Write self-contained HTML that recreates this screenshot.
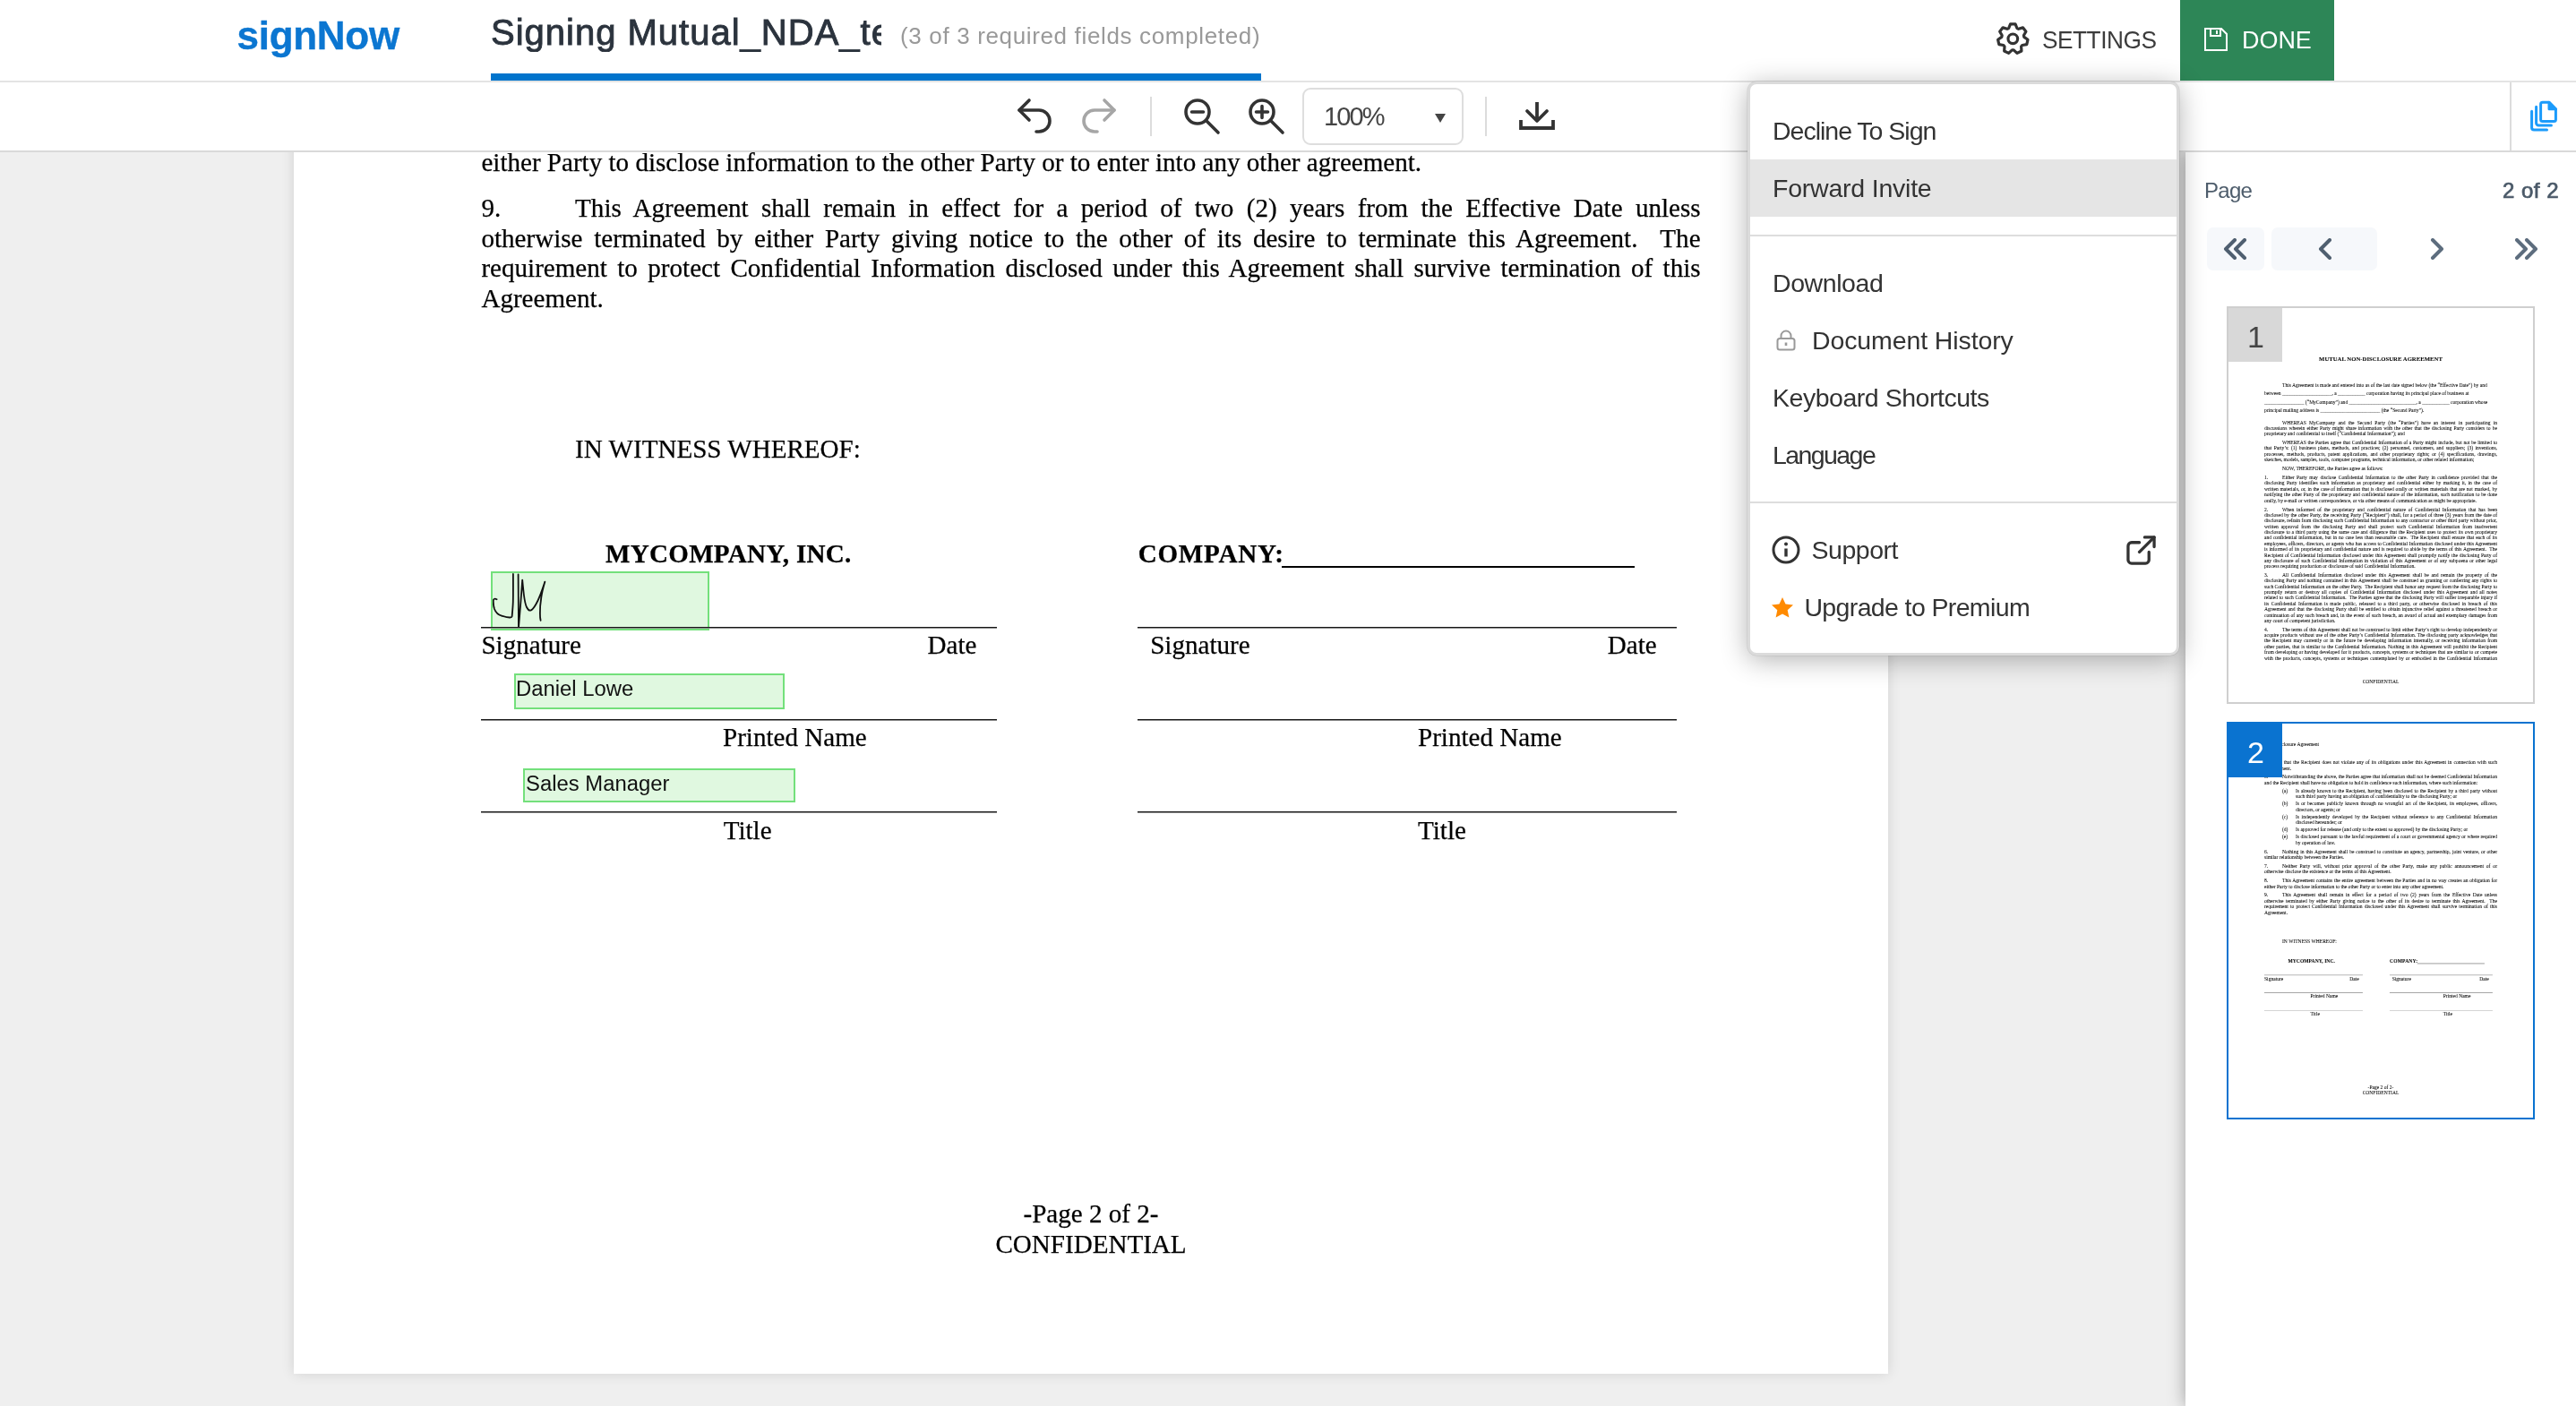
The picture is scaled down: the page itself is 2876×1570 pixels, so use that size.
<!DOCTYPE html>
<html lang="en">
<head>
<meta charset="utf-8">
<title>signNow - Signing Mutual_NDA_template</title>
<style>
*{box-sizing:border-box;margin:0;padding:0}
html,body{width:2876px;height:1570px;overflow:hidden;background:#efefef}
body{font-family:"Liberation Sans",sans-serif;color:#333;position:relative}
.abs{position:absolute}
#header,#toolbar,#page,#sidebar,#menu{will-change:transform}
/* ---------- header ---------- */
#header{position:absolute;left:0;top:0;width:2876px;height:92px;background:#fff;border-bottom:2px solid #e4e4e4;z-index:20}
#logo{position:absolute;left:264.5px;top:15px;font-size:44px;font-weight:700;color:#0b76d1;letter-spacing:-.27px;-webkit-text-stroke:.4px #0b76d1;line-height:50px;white-space:nowrap}
#title{position:absolute;left:548px;top:8px;width:436px;height:50px;overflow:hidden;white-space:nowrap;font-size:40px;line-height:56px;color:#2b333d;letter-spacing:1px;-webkit-text-stroke:.9px #2b333d}
#subtitle{position:absolute;left:1005px;top:24px;font-size:26px;line-height:32px;color:#999;white-space:nowrap;letter-spacing:.65px}
#progress{position:absolute;left:548px;top:82px;width:860px;height:8px;background:#0074cc}
#settings{position:absolute;left:2280px;top:27px;font-size:28.5px;line-height:34px;color:#3c3c3c;letter-spacing:-.5px;white-space:nowrap;transform:scaleX(.92);transform-origin:0 0}
#gear{position:absolute;left:2226px;top:22.2px;width:42.6px;height:42.6px}
#done{position:absolute;left:2434px;top:0;width:172px;height:90px;background:#2d8657;color:#fff}
#done span{position:absolute;left:69px;top:27px;font-size:28.5px;line-height:34px;transform:scaleX(.945);transform-origin:0 0}
#done svg{position:absolute;left:27px;top:31px;width:26px;height:26px}
/* ---------- toolbar ---------- */
#toolbar{position:absolute;left:0;top:92px;width:2876px;height:78px;background:#fff;border-bottom:2px solid #d9d9d9;z-index:10}
.sep{position:absolute;top:16px;width:2px;height:44px;background:#dcdcdc}
#zoomsel{position:absolute;left:1454px;top:6px;width:180px;height:64px;border:2px solid #dedede;border-radius:9px;background:#fff}
#zoomsel span{position:absolute;left:22px;top:14px;font-size:29px;line-height:32px;color:#444;letter-spacing:-1.9px}
#zoomsel i{position:absolute;left:146px;top:26.5px;width:0;height:0;border-left:6px solid transparent;border-right:6px solid transparent;border-top:10px solid #444}
#tbdiv{position:absolute;left:2802px;top:0;width:2px;height:76px;background:#dcdcdc}
/* ---------- document ---------- */
#page{position:absolute;left:328px;top:-770px;width:1780px;height:2304px;background:#fff;box-shadow:0 0 14px rgba(0,0,0,.12);z-index:1}
.doc{position:absolute;left:0;top:0;width:1780px;height:2304px;font-family:"Liberation Serif",serif;font-size:29.085px;line-height:33.45px;color:#000;-webkit-text-stroke:.25px #000}
.doc .l{position:absolute;white-space:nowrap}
.doc .j{white-space:normal;text-align:justify;text-align-last:justify}
.doc .b{font-weight:700;letter-spacing:.27px}
.doc .tab{display:inline-block;text-align:left}
.doc .hl{position:absolute;height:2px;background:linear-gradient(to bottom,#161616 50%,#8c8c8c 50%)}
.field{position:absolute;background:#e0f8e0;border:2px solid #73e07b;font-family:"Liberation Sans",sans-serif;font-size:23.85px;color:#111;white-space:nowrap}
/* ---------- sidebar ---------- */
#sidebar{position:absolute;left:2440px;top:170px;width:436px;height:1400px;background:#fff;box-shadow:0 0 18px rgba(0,0,0,.35);z-index:5}
#sidebar .lbl{position:absolute;top:28px;font-size:24px;line-height:30px;color:#4d5c6b;white-space:nowrap}
.nav{position:absolute;top:84px;height:48px;border-radius:7px}
.nav svg{position:absolute;top:12px;width:40px;height:24px}
.thumb{position:absolute;left:46px;width:344px;height:444px;border:2px solid #cfcfcf;background:#fff;overflow:hidden}
.thumb .mini{position:absolute;left:0;top:0;width:1780px;height:2304px;transform:scale(.191);transform-origin:0 0}
.badge{position:absolute;left:-2px;top:-2px;width:62px;height:62px;font-size:34px;line-height:68px;text-align:center;padding-left:3px}
/* ---------- menu ---------- */
#menu{position:absolute;left:1951px;top:91px;width:482px;height:641px;background:#fff;border:3px solid #dbdbdb;border-radius:10px;box-shadow:0 0 0 .6px rgba(0,0,0,.1),0 5px 30px rgba(0,0,0,.3);z-index:30;padding-top:20px;overflow:hidden}
.mi{position:relative;height:64px;font-size:28.5px;line-height:64px;color:#333;padding-left:25px;white-space:nowrap}
.mi.hov{background:#e5e5e5}
.mdiv{height:2px;background:#dddddd;margin:20px 0}
.mi svg{position:absolute}
</style>
</head>
<body>

<!-- ================= DOCUMENT PAGE ================= -->
<div id="page">
  <!-- filled fields -->
  <div class="field" style="left:220px;top:1408px;width:244px;height:66px">
    <svg class="abs" style="left:0;top:0" width="240" height="62" viewBox="550 640 240 62" fill="none" stroke="#111" stroke-width="1.8" stroke-linecap="round" stroke-linejoin="round">
      <path d="M554.6 669.2 C552.5 668.2 551 668.6 550.8 670.5 C550.6 674 551 677 552 680 C553.5 684 556 686.5 560 687.6 C563 688.5 566 689.5 569 689.5 C570.8 689.6 571.5 689.4 571.6 688.5 C572 684 572.6 678 572.8 672 C573 662 572.9 650 572.9 640.9"/>
      <path d="M578.6 641.4 C578.7 660 578.8 680 579 701 C580.5 684 582 665 583.2 647.6 C583.8 654 584.4 660 585 665 C585.8 671 586.8 675.5 588 678 C589.5 681 591 682 592.5 681.6 C594.5 681 596.5 678 598.5 674.5 C602.5 667.5 605.5 658.5 608.4 649.6 C606.5 656 605 662 604.2 668 C603.2 674 602.8 680 602.9 685 C602.9 688.5 603.1 691 603.6 692.8"/>
    </svg>
  </div>
  <div class="field" style="left:246px;top:1522px;width:302px;height:40px;line-height:30px;padding-left:0">Daniel Lowe</div>
  <div class="field" style="left:256px;top:1628px;width:304px;height:38px;line-height:29.6px;padding-left:1px">Sales Manager</div>
  <div class="doc">
<div class="l" style="left:119.0px;top:102.56px;">Mutual Non-Disclosure Agreement</div>
<div class="l j" style="left:209.4px;top:210.06px;width:1361.2px;">provided that the Recipient does not violate any of its obligations under this Agreement in connection with such</div>
<div class="l" style="left:209.4px;top:243.51px;width:1361.2px;">development.</div>
<div class="l j" style="left:209.4px;top:294.56px;width:1361.2px;"><span class="tab" style="width:104.7px">5.</span>Notwithstanding the above, the Parties agree that information shall not be deemed Confidential Information</div>
<div class="l" style="left:209.4px;top:328.01px;width:1361.2px;">and the Recipient shall have no obligation to hold in confidence such information, where such information:</div>
<div class="l" style="left:314.1px;top:376.56px">(a)</div>
<div class="l j" style="left:392.6px;top:376.56px;width:1178.0px;">Is already known to the Recipient, having been disclosed to the Recipient by a third party without</div>
<div class="l" style="left:392.6px;top:410.01px;width:1178.0px;">such third party having an obligation of confidentiality to the disclosing Party; or</div>
<div class="l" style="left:314.1px;top:452.06px">(b)</div>
<div class="l j" style="left:392.6px;top:452.06px;width:1178.0px;">Is or becomes publicly known through no wrongful act of the Recipient, its employees, officers,</div>
<div class="l" style="left:392.6px;top:485.51px;width:1178.0px;">directors, or agents; or</div>
<div class="l" style="left:314.1px;top:527.56px">(c)</div>
<div class="l j" style="left:392.6px;top:527.56px;width:1178.0px;">Is independently developed by the Recipient without reference to any Confidential Information</div>
<div class="l" style="left:392.6px;top:561.01px;width:1178.0px;">disclosed hereunder; or</div>
<div class="l" style="left:314.1px;top:603.06px">(d)</div>
<div class="l" style="left:392.6px;top:603.06px;width:1178.0px;">Is approved for release (and only to the extent so approved) by the disclosing Party; or</div>
<div class="l" style="left:314.1px;top:645.06px">(e)</div>
<div class="l j" style="left:392.6px;top:645.06px;width:1178.0px;">Is disclosed pursuant to the lawful requirement of a court or governmental agency or where required</div>
<div class="l" style="left:392.6px;top:678.51px;width:1178.0px;">by operation of law.</div>
<div class="l j" style="left:209.4px;top:731.06px;width:1361.2px;"><span class="tab" style="width:104.7px">6.</span>Nothing in this Agreement shall be construed to constitute an agency, partnership, joint venture, or other</div>
<div class="l" style="left:209.4px;top:764.51px;width:1361.2px;">similar relationship between the Parties.</div>
<div class="l j" style="left:209.4px;top:816.46px;width:1361.2px;"><span class="tab" style="width:104.7px">7.</span>Neither Party will, without prior approval of the other Party, make any public announcement of or</div>
<div class="l" style="left:209.4px;top:849.91px;width:1361.2px;">otherwise disclose the existence or the terms of this Agreement.</div>
<div class="l j" style="left:209.4px;top:901.31px;width:1361.2px;"><span class="tab" style="width:104.7px">8.</span>This Agreement contains the entire agreement between the Parties and in no way creates an obligation for</div>
<div class="l" style="left:209.4px;top:934.76px;width:1361.2px;">either Party to disclose information to the other Party or to enter into any other agreement.</div>
<div class="l j" style="left:209.4px;top:986.16px;width:1361.2px;"><span class="tab" style="width:104.7px">9.</span>This Agreement shall remain in effect for a period of two (2) years from the Effective Date unless</div>
<div class="l j" style="left:209.4px;top:1019.61px;width:1361.2px;">otherwise terminated by either Party giving notice to the other of its desire to terminate this Agreement.&nbsp; The</div>
<div class="l j" style="left:209.4px;top:1053.06px;width:1361.2px;">requirement to protect Confidential Information disclosed under this Agreement shall survive termination of this</div>
<div class="l" style="left:209.4px;top:1086.51px;width:1361.2px;">Agreement.</div>
<div class="l" style="left:314.1px;top:1255.06px;">IN WITNESS WHEREOF:</div>
<div class="l b" style="left:348.0px;top:1372.36px;">MYCOMPANY, INC.</div>
<div class="l b" style="left:942.7px;top:1372.36px;letter-spacing:.78px;">COMPANY:</div>
<div class="hl" style="left:1103.4px;top:1401.6px;width:393.3px;height:2px;background:#000"></div>
<div class="hl" style="left:209px;top:1470.0px;width:576.3px"></div>
<div class="hl" style="left:942.2px;top:1470.0px;width:602px"></div>
<div class="hl" style="left:209px;top:1573.0px;width:576.3px"></div>
<div class="hl" style="left:942.2px;top:1573.0px;width:602px"></div>
<div class="hl" style="left:209px;top:1676.0px;width:576.3px"></div>
<div class="hl" style="left:942.2px;top:1676.0px;width:602px"></div>
<div class="l" style="left:209.4px;top:1473.86px;">Signature</div>
<div class="l" style="left:707.5px;top:1473.86px;">Date</div>
<div class="l" style="left:956.2px;top:1473.86px;">Signature</div>
<div class="l" style="left:1466.8px;top:1473.86px;">Date</div>
<div class="l" style="left:479.0px;top:1577.26px;">Printed Name</div>
<div class="l" style="left:1255.0px;top:1577.26px;">Printed Name</div>
<div class="l" style="left:479.7px;top:1680.76px;">Title</div>
<div class="l" style="left:1255.0px;top:1680.76px;">Title</div>
<div class="l" style="left:0.0px;top:2109.36px;width:1780.0px;text-align:center;">-Page 2 of 2-</div>
<div class="l" style="left:0.0px;top:2143.06px;width:1780.0px;text-align:center;">CONFIDENTIAL</div>
  </div>
</div>

<!-- ================= HEADER ================= -->
<div id="header">
  <div id="logo">signNow</div>
  <div id="title">Signing Mutual_NDA_template</div>
  <div id="subtitle">(3 of 3 required fields completed)</div>
  <div id="progress"></div>
  <svg id="gear" viewBox="0 0 40 40" fill="none" stroke="#333" stroke-width="3" stroke-linejoin="round">
    <circle cx="20" cy="20" r="5"/>
    <path d="M15.64 8.93 L17.41 4.52 L22.59 4.52 L24.36 8.93 L25.94 9.69 L30.49 8.32 L33.72 12.37 L31.38 16.51 L31.76 18.21 L35.67 20.92 L34.52 25.97 L29.82 26.72 L28.73 28.08 L29.05 32.83 L24.38 35.08 L20.87 31.87 L19.13 31.87 L15.62 35.08 L10.95 32.83 L11.27 28.08 L10.18 26.72 L5.48 25.97 L4.33 20.92 L8.24 18.21 L8.62 16.51 L6.28 12.37 L9.51 8.32 L14.06 9.69Z"/>
  </svg>
  <div id="settings">SETTINGS</div>
  <div id="done">
    <svg viewBox="0 0 26 26" fill="none" stroke="#fff" stroke-width="2"><path d="M1 1h18l6 6v18H1z"/><path d="M7 1v8h11V1"/><path d="M14 3v4"/></svg>
    <span>DONE</span>
  </div>
</div>

<!-- ================= TOOLBAR ================= -->
<div id="toolbar">
  <!-- undo -->
  <svg class="abs" style="left:1134px;top:16px" width="42" height="42" viewBox="0 0 42 42" fill="none" stroke="#333" stroke-width="3.6" stroke-linecap="round" stroke-linejoin="round"><path d="M15 4L4 15l11 11"/><path d="M4 15h22a12 12 0 0 1 0 24h-3"/></svg>
  <!-- redo -->
  <svg class="abs" style="left:1206px;top:16px" width="42" height="42" viewBox="0 0 42 42" fill="none" stroke="#a6a6a6" stroke-width="3.6" stroke-linecap="round" stroke-linejoin="round"><path d="M27 4l11 11-11 11"/><path d="M38 15H16a12 12 0 0 0 0 24h3"/></svg>
  <div class="sep" style="left:1284px"></div>
  <!-- zoom out -->
  <svg class="abs" style="left:1320px;top:16px" width="44" height="44" viewBox="0 0 44 44" fill="none" stroke="#333" stroke-width="3.6" stroke-linecap="round"><circle cx="17" cy="17" r="13"/><path d="M27 27l13 13"/><path d="M10.5 17h13"/></svg>
  <!-- zoom in -->
  <svg class="abs" style="left:1392px;top:16px" width="44" height="44" viewBox="0 0 44 44" fill="none" stroke="#333" stroke-width="3.6" stroke-linecap="round"><circle cx="17" cy="17" r="13"/><path d="M27 27l13 13"/><path d="M10.5 17h13M17 10.5v13"/></svg>
  <div id="zoomsel"><span>100%</span><i></i></div>
  <div class="sep" style="left:1658px"></div>
  <!-- download -->
  <svg class="abs" style="left:1694px;top:20px" width="44" height="36" viewBox="0 0 44 36" fill="none" stroke="#333" stroke-width="3.8" stroke-linecap="butt" stroke-linejoin="miter"><path d="M22 2v20"/><path d="M11 12l11 11 11-11" stroke-linecap="round" stroke-linejoin="round"/><path d="M4 22v9h36v-9"/></svg>
  <div id="tbdiv"></div>
  <!-- pages icon -->
  <svg class="abs" style="left:2824px;top:20px" width="33" height="36" viewBox="0 0 33 36" fill="none" stroke="#1b9bfb" stroke-width="3" stroke-linejoin="round" stroke-linecap="round"><path d="M14.6 2.3H22L29.4 9.7V21.4a2 2 0 0 1-2 2H14.6a2 2 0 0 1-2-2V4.3a2 2 0 0 1 2-2z"/><path d="M22 2.3V9.7H29.4z" fill="#1b9bfb"/><path d="M7.6 7.2V25.4a2.5 2.5 0 0 0 2.5 2.5H24.4"/><path d="M2.6 12.3V30.5a2.5 2.5 0 0 0 2.5 2.5H19.5"/></svg>
</div>

<!-- ================= SIDEBAR ================= -->
<div id="sidebar">
  <div class="lbl" style="left:21px;letter-spacing:-.7px">Page</div>
  <div class="lbl" style="right:19px;color:#4a5968;-webkit-text-stroke:.7px #4a5968;letter-spacing:.5px">2 of 2</div>
  <div class="nav" style="left:24px;width:64px;background:#f6f8fb"><svg style="left:12px" viewBox="0 0 40 24" fill="none" stroke="#4f5f70" stroke-width="4" stroke-linecap="round" stroke-linejoin="round"><path d="M19 2L9 12l10 10M30 2L20 12l10 10"/></svg></div>
  <div class="nav" style="left:96px;width:118px;background:#f6f8fb"><svg style="left:39px" viewBox="0 0 40 24" fill="none" stroke="#4f5f70" stroke-width="4" stroke-linecap="round" stroke-linejoin="round"><path d="M26 2L16 12l10 10"/></svg></div>
  <div class="nav" style="left:222px;width:118px"><svg style="left:39px" viewBox="0 0 40 24" fill="none" stroke="#5d6d7e" stroke-width="4" stroke-linecap="round" stroke-linejoin="round"><path d="M15 2l10 10-10 10"/></svg></div>
  <div class="nav" style="left:348px;width:64px"><svg style="left:12px" viewBox="0 0 40 24" fill="none" stroke="#5d6d7e" stroke-width="4" stroke-linecap="round" stroke-linejoin="round"><path d="M10 2l10 10-10 10M21 2l10 10-10 10"/></svg></div>

  <div class="thumb" style="top:172px">
    <div class="mini"><div class="doc">
<div class="l b" style="left:0.0px;top:281.56px;width:1780.0px;text-align:center;font-size:34.9px;">MUTUAL NON-DISCLOSURE AGREEMENT</div>
<div class="l" style="left:314.1px;top:433.06px;width:1256.5px;">This Agreement is made and entered into as of the last date signed below (the “Effective Date”) by and</div>
<div class="l" style="left:209.4px;top:480.06px;">between ____________________, a ___________ corporation having its principal place of business at</div>
<div class="l" style="left:209.4px;top:535.56px;">________________ (“MyCompany”) and ___________________________, a ___________ corporation whose</div>
<div class="l" style="left:209.4px;top:582.56px;">principal mailing address is ________________________ (the “Second Party”).</div>
<div class="l j" style="left:314.1px;top:652.56px;width:1256.5px;">WHEREAS MyCompany and the Second Party (the “Parties”) have an interest in participating in</div>
<div class="l j" style="left:209.4px;top:686.01px;width:1361.2px;">discussions wherein either Party might share information with the other that the disclosing Party considers to be</div>
<div class="l" style="left:209.4px;top:719.46px;width:1361.2px;">proprietary and confidential to itself (“Confidential Information”); and</div>
<div class="l j" style="left:314.1px;top:769.56px;width:1256.5px;">WHEREAS the Parties agree that Confidential Information of a Party might include, but not be limited to</div>
<div class="l j" style="left:209.4px;top:803.01px;width:1361.2px;">that Party’s: (1) business plans, methods, and practices; (2) personnel, customers, and suppliers; (3) inventions,</div>
<div class="l j" style="left:209.4px;top:836.46px;width:1361.2px;">processes, methods, products, patent applications, and other proprietary rights; or (4) specifications, drawings,</div>
<div class="l" style="left:209.4px;top:869.91px;width:1361.2px;">sketches, models, samples, tools, computer programs, technical information, or other related information;</div>
<div class="l" style="left:314.1px;top:920.06px;">NOW, THEREFORE, the Parties agree as follows:</div>
<div class="l j" style="left:209.4px;top:974.56px;width:1361.2px;"><span class="tab" style="width:104.7px">1.</span>Either Party may disclose Confidential Information to the other Party in confidence provided that the</div>
<div class="l j" style="left:209.4px;top:1008.01px;width:1361.2px;">disclosing Party identifies such information as proprietary and confidential either by marking it, in the case of</div>
<div class="l j" style="left:209.4px;top:1041.46px;width:1361.2px;">written materials, or, in the case of information that is disclosed orally or written materials that are not marked, by</div>
<div class="l j" style="left:209.4px;top:1074.91px;width:1361.2px;">notifying the other Party of the proprietary and confidential nature of the information, such notification to be done</div>
<div class="l" style="left:209.4px;top:1108.36px;width:1361.2px;">orally, by e-mail or written correspondence, or via other means of communication as might be appropriate.</div>
<div class="l j" style="left:209.4px;top:1159.56px;width:1361.2px;"><span class="tab" style="width:104.7px">2.</span>When informed of the proprietary and confidential nature of Confidential Information that has been</div>
<div class="l j" style="left:209.4px;top:1193.01px;width:1361.2px;">disclosed by the other Party, the receiving Party (“Recipient”) shall, for a period of three (3) years from the date of</div>
<div class="l j" style="left:209.4px;top:1226.46px;width:1361.2px;">disclosure, refrain from disclosing such Confidential Information to any contractor or other third party without prior,</div>
<div class="l j" style="left:209.4px;top:1259.91px;width:1361.2px;">written approval from the disclosing Party and shall protect such Confidential Information from inadvertent</div>
<div class="l j" style="left:209.4px;top:1293.36px;width:1361.2px;">disclosure to a third party using the same care and diligence that the Recipient uses to protect its own proprietary</div>
<div class="l j" style="left:209.4px;top:1326.81px;width:1361.2px;">and confidential information, but in no case less than reasonable care.&nbsp; The Recipient shall ensure that each of its</div>
<div class="l j" style="left:209.4px;top:1360.26px;width:1361.2px;">employees, officers, directors, or agents who has access to Confidential Information disclosed under this Agreement</div>
<div class="l j" style="left:209.4px;top:1393.71px;width:1361.2px;">is informed of its proprietary and confidential nature and is required to abide by the terms of this Agreement.&nbsp; The</div>
<div class="l j" style="left:209.4px;top:1427.16px;width:1361.2px;">Recipient of Confidential Information disclosed under this Agreement shall promptly notify the disclosing Party of</div>
<div class="l j" style="left:209.4px;top:1460.61px;width:1361.2px;">any disclosure of such Confidential Information in violation of this Agreement or of any subpoena or other legal</div>
<div class="l" style="left:209.4px;top:1494.06px;width:1361.2px;">process requiring production or disclosure of said Confidential Information.</div>
<div class="l j" style="left:209.4px;top:1544.56px;width:1361.2px;"><span class="tab" style="width:104.7px">3.</span>All Confidential Information disclosed under this Agreement shall be and remain the property of the</div>
<div class="l j" style="left:209.4px;top:1578.01px;width:1361.2px;">disclosing Party and nothing contained in this Agreement shall be construed as granting or conferring any rights to</div>
<div class="l j" style="left:209.4px;top:1611.46px;width:1361.2px;">such Confidential Information on the other Party.&nbsp; The Recipient shall honor any request from the disclosing Party to</div>
<div class="l j" style="left:209.4px;top:1644.91px;width:1361.2px;">promptly return or destroy all copies of Confidential Information disclosed under this Agreement and all notes</div>
<div class="l j" style="left:209.4px;top:1678.36px;width:1361.2px;">related to such Confidential Information.&nbsp; The Parties agree that the disclosing Party will suffer irreparable injury if</div>
<div class="l j" style="left:209.4px;top:1711.81px;width:1361.2px;">its Confidential Information is made public, released to a third party, or otherwise disclosed in breach of this</div>
<div class="l j" style="left:209.4px;top:1745.26px;width:1361.2px;">Agreement and that the disclosing Party shall be entitled to obtain injunctive relief against a threatened breach or</div>
<div class="l j" style="left:209.4px;top:1778.71px;width:1361.2px;">continuation of any such breach and, in the event of such breach, an award of actual and exemplary damages from</div>
<div class="l" style="left:209.4px;top:1812.16px;width:1361.2px;">any court of competent jurisdiction.</div>
<div class="l j" style="left:209.4px;top:1862.06px;width:1361.2px;"><span class="tab" style="width:104.7px">4.</span>The terms of this Agreement shall not be construed to limit either Party’s right to develop independently or</div>
<div class="l j" style="left:209.4px;top:1895.51px;width:1361.2px;">acquire products without use of the other Party’s Confidential Information. The disclosing party acknowledges that</div>
<div class="l j" style="left:209.4px;top:1928.96px;width:1361.2px;">the Recipient may currently or in the future be developing information internally, or receiving information from</div>
<div class="l j" style="left:209.4px;top:1962.41px;width:1361.2px;">other parties, that is similar to the Confidential Information. Nothing in this Agreement will prohibit the Recipient</div>
<div class="l j" style="left:209.4px;top:1995.86px;width:1361.2px;">from developing or having developed for it products, concepts, systems or techniques that are similar to or compete</div>
<div class="l j" style="left:209.4px;top:2029.31px;width:1361.2px;">with the products, concepts, systems or techniques contemplated by or embodied in the Confidential Information</div>
<div class="l" style="left:0.0px;top:2167.56px;width:1780.0px;text-align:center;">CONFIDENTIAL</div>
    </div></div>
    <div class="badge" style="background:#d8d8d8;color:#444">1</div>
  </div>
  <div class="thumb" style="top:636px;border-color:#0a73d0">
    <div class="mini"><div class="doc">
<div class="l" style="left:119.0px;top:102.56px;">Mutual Non-Disclosure Agreement</div>
<div class="l j" style="left:209.4px;top:210.06px;width:1361.2px;">provided that the Recipient does not violate any of its obligations under this Agreement in connection with such</div>
<div class="l" style="left:209.4px;top:243.51px;width:1361.2px;">development.</div>
<div class="l j" style="left:209.4px;top:294.56px;width:1361.2px;"><span class="tab" style="width:104.7px">5.</span>Notwithstanding the above, the Parties agree that information shall not be deemed Confidential Information</div>
<div class="l" style="left:209.4px;top:328.01px;width:1361.2px;">and the Recipient shall have no obligation to hold in confidence such information, where such information:</div>
<div class="l" style="left:314.1px;top:376.56px">(a)</div>
<div class="l j" style="left:392.6px;top:376.56px;width:1178.0px;">Is already known to the Recipient, having been disclosed to the Recipient by a third party without</div>
<div class="l" style="left:392.6px;top:410.01px;width:1178.0px;">such third party having an obligation of confidentiality to the disclosing Party; or</div>
<div class="l" style="left:314.1px;top:452.06px">(b)</div>
<div class="l j" style="left:392.6px;top:452.06px;width:1178.0px;">Is or becomes publicly known through no wrongful act of the Recipient, its employees, officers,</div>
<div class="l" style="left:392.6px;top:485.51px;width:1178.0px;">directors, or agents; or</div>
<div class="l" style="left:314.1px;top:527.56px">(c)</div>
<div class="l j" style="left:392.6px;top:527.56px;width:1178.0px;">Is independently developed by the Recipient without reference to any Confidential Information</div>
<div class="l" style="left:392.6px;top:561.01px;width:1178.0px;">disclosed hereunder; or</div>
<div class="l" style="left:314.1px;top:603.06px">(d)</div>
<div class="l" style="left:392.6px;top:603.06px;width:1178.0px;">Is approved for release (and only to the extent so approved) by the disclosing Party; or</div>
<div class="l" style="left:314.1px;top:645.06px">(e)</div>
<div class="l j" style="left:392.6px;top:645.06px;width:1178.0px;">Is disclosed pursuant to the lawful requirement of a court or governmental agency or where required</div>
<div class="l" style="left:392.6px;top:678.51px;width:1178.0px;">by operation of law.</div>
<div class="l j" style="left:209.4px;top:731.06px;width:1361.2px;"><span class="tab" style="width:104.7px">6.</span>Nothing in this Agreement shall be construed to constitute an agency, partnership, joint venture, or other</div>
<div class="l" style="left:209.4px;top:764.51px;width:1361.2px;">similar relationship between the Parties.</div>
<div class="l j" style="left:209.4px;top:816.46px;width:1361.2px;"><span class="tab" style="width:104.7px">7.</span>Neither Party will, without prior approval of the other Party, make any public announcement of or</div>
<div class="l" style="left:209.4px;top:849.91px;width:1361.2px;">otherwise disclose the existence or the terms of this Agreement.</div>
<div class="l j" style="left:209.4px;top:901.31px;width:1361.2px;"><span class="tab" style="width:104.7px">8.</span>This Agreement contains the entire agreement between the Parties and in no way creates an obligation for</div>
<div class="l" style="left:209.4px;top:934.76px;width:1361.2px;">either Party to disclose information to the other Party or to enter into any other agreement.</div>
<div class="l j" style="left:209.4px;top:986.16px;width:1361.2px;"><span class="tab" style="width:104.7px">9.</span>This Agreement shall remain in effect for a period of two (2) years from the Effective Date unless</div>
<div class="l j" style="left:209.4px;top:1019.61px;width:1361.2px;">otherwise terminated by either Party giving notice to the other of its desire to terminate this Agreement.&nbsp; The</div>
<div class="l j" style="left:209.4px;top:1053.06px;width:1361.2px;">requirement to protect Confidential Information disclosed under this Agreement shall survive termination of this</div>
<div class="l" style="left:209.4px;top:1086.51px;width:1361.2px;">Agreement.</div>
<div class="l" style="left:314.1px;top:1255.06px;">IN WITNESS WHEREOF:</div>
<div class="l b" style="left:348.0px;top:1372.36px;">MYCOMPANY, INC.</div>
<div class="l b" style="left:942.7px;top:1372.36px;letter-spacing:.78px;">COMPANY:</div>
<div class="hl" style="left:1103.4px;top:1401.6px;width:393.3px;height:2px;background:#000"></div>
<div class="hl" style="left:209px;top:1470.0px;width:576.3px"></div>
<div class="hl" style="left:942.2px;top:1470.0px;width:602px"></div>
<div class="hl" style="left:209px;top:1573.0px;width:576.3px"></div>
<div class="hl" style="left:942.2px;top:1573.0px;width:602px"></div>
<div class="hl" style="left:209px;top:1676.0px;width:576.3px"></div>
<div class="hl" style="left:942.2px;top:1676.0px;width:602px"></div>
<div class="l" style="left:209.4px;top:1473.86px;">Signature</div>
<div class="l" style="left:707.5px;top:1473.86px;">Date</div>
<div class="l" style="left:956.2px;top:1473.86px;">Signature</div>
<div class="l" style="left:1466.8px;top:1473.86px;">Date</div>
<div class="l" style="left:479.0px;top:1577.26px;">Printed Name</div>
<div class="l" style="left:1255.0px;top:1577.26px;">Printed Name</div>
<div class="l" style="left:479.7px;top:1680.76px;">Title</div>
<div class="l" style="left:1255.0px;top:1680.76px;">Title</div>
<div class="l" style="left:0.0px;top:2109.36px;width:1780.0px;text-align:center;">-Page 2 of 2-</div>
<div class="l" style="left:0.0px;top:2143.06px;width:1780.0px;text-align:center;">CONFIDENTIAL</div>
    </div></div>
    <div class="badge" style="background:#0a73d0;color:#fff">2</div>
  </div>
</div>

<!-- ================= SETTINGS MENU ================= -->
<div id="menu">
  <div class="mi" style="letter-spacing:-1.01px">Decline To Sign</div>
  <div class="mi hov" style="letter-spacing:-.22px">Forward Invite</div>
  <div class="mdiv"></div>
  <div class="mi" style="letter-spacing:-0.42px">Download</div>
  <div class="mi" style="padding-left:69px;letter-spacing:-.11px">
    <svg style="left:29px;top:20px" width="22" height="24" viewBox="0 0 22 24" fill="none" stroke="#9a9a9a" stroke-width="2"><rect x="1.5" y="10" width="19" height="12.5" rx="2.5"/><path d="M5.5 10V7a5.5 5.5 0 0 1 11 0v3"/><path d="M11 14.5v3.5" stroke-width="2.6"/></svg>
    Document History</div>
  <div class="mi" style="letter-spacing:-0.47px">Keyboard Shortcuts</div>
  <div class="mi" style="letter-spacing:-1.58px">Language</div>
  <div class="mdiv"></div>
  <div class="mi" style="padding-left:68.6px;letter-spacing:-.5px">
    <svg style="left:23.7px;top:16px" width="32" height="32" viewBox="0 0 32 32" fill="none" stroke="#333" stroke-width="3"><circle cx="16" cy="16" r="14"/><path d="M16 14.5v9" stroke-width="3.4"/><circle cx="16" cy="9.5" r="2" fill="#333" stroke="none"/></svg>
    Support
    <svg style="left:419.6px;top:15.5px" width="33" height="33" viewBox="0 0 34 34" fill="none" stroke="#333" stroke-width="3.4" stroke-linecap="round" stroke-linejoin="round"><path d="M26 19v9a4 4 0 0 1-4 4H6a4 4 0 0 1-4-4V12a4 4 0 0 1 4-4h9"/><path d="M21 2h11v11"/><path d="M32 2L15 19"/></svg>
  </div>
  <div class="mi" style="padding-left:60.4px;letter-spacing:-.63px">
    <svg style="left:23.7px;top:20.5px" width="24" height="23" viewBox="0 0 24 23" fill="#ff8a00"><path d="M12 0l3.5 7.6 8.5 1-6.3 5.7 1.7 8.2L12 18.4 4.6 22.5l1.7-8.2L0 8.6l8.5-1z"/></svg>
    Upgrade to Premium</div>
</div>

</body>
</html>
